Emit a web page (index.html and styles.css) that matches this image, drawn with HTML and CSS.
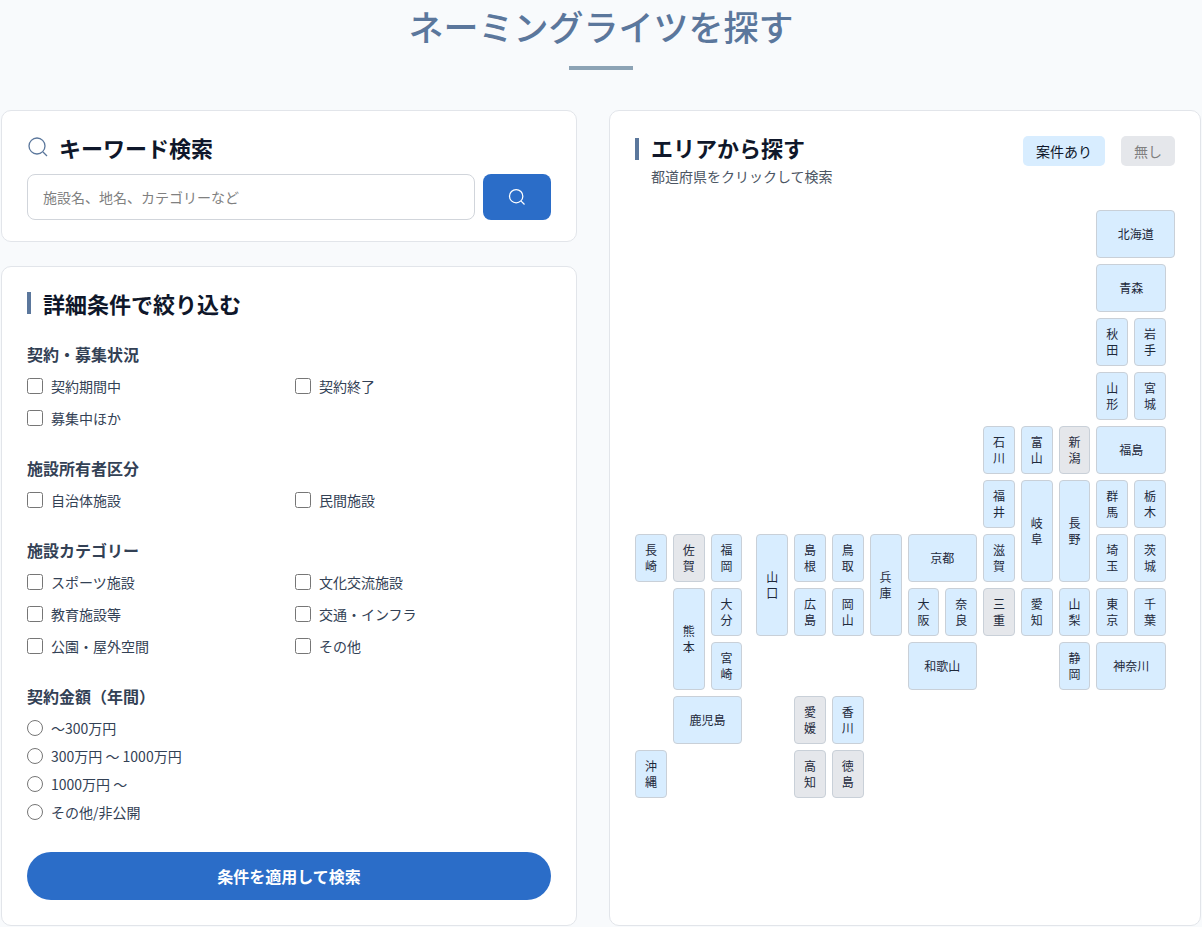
FILE: index.html
```html
<!DOCTYPE html>
<html lang="ja">
<head>
    <meta charset="UTF-8">
    <meta name="viewport" content="width=device-width, initial-scale=1.0">
    <title>ネーミングライツを探す</title>
    <link rel="stylesheet" href="styles.css">
</head>
<body>
    <main class="container">
        <h1 class="page-title">ネーミングライツを探す</h1>

        <div class="search-layout">
            <div class="search-column">
                <form class="card keyword-card">
                    <h2 class="keyword-title">
                        <svg class="keyword-icon" viewBox="0 0 24 24" aria-hidden="true"><circle cx="10" cy="10" r="8"/><path d="M16 16l4 4"/></svg>
                        <label for="keyword">キーワード検索</label>
                    </h2>
                    <div class="keyword-row">
                        <input class="keyword-input" type="text" id="keyword" placeholder="施設名、地名、カテゴリーなど">
                        <button class="keyword-button" type="submit" aria-label="検索">
                            <svg viewBox="0 0 24 24" aria-hidden="true"><circle cx="11" cy="11" r="8"/><path d="M17 17l4 4"/></svg>
                        </button>
                    </div>
                </form>

                <form class="card filter-card">
                    <h2 class="section-title">詳細条件で絞り込む</h2>

                    <fieldset class="filter-group">
                        <legend>契約・募集状況</legend>
                        <div class="check-grid">
                            <label><input type="checkbox" name="status">契約期間中</label>
                            <label><input type="checkbox" name="status">契約終了</label>
                            <label><input type="checkbox" name="status">募集中ほか</label>
                        </div>
                    </fieldset>

                    <fieldset class="filter-group">
                        <legend>施設所有者区分</legend>
                        <div class="check-grid">
                            <label><input type="checkbox" name="owner">自治体施設</label>
                            <label><input type="checkbox" name="owner">民間施設</label>
                        </div>
                    </fieldset>

                    <fieldset class="filter-group">
                        <legend>施設カテゴリー</legend>
                        <div class="check-grid">
                            <label><input type="checkbox" name="category">スポーツ施設</label>
                            <label><input type="checkbox" name="category">文化交流施設</label>
                            <label><input type="checkbox" name="category">教育施設等</label>
                            <label><input type="checkbox" name="category">交通・インフラ</label>
                            <label><input type="checkbox" name="category">公園・屋外空間</label>
                            <label><input type="checkbox" name="category">その他</label>
                        </div>
                    </fieldset>

                    <fieldset class="filter-group">
                        <legend>契約金額（年間）</legend>
                        <div class="radio-list">
                            <label><input type="radio" name="price">～300万円</label>
                            <label><input type="radio" name="price">300万円 ～ 1000万円</label>
                            <label><input type="radio" name="price">1000万円 ～</label>
                            <label><input type="radio" name="price">その他/非公開</label>
                        </div>
                    </fieldset>

                    <button class="apply-button" type="submit">条件を適用して検索</button>
                </form>
            </div>

            <section class="card area-card">
                <div class="area-header">
                    <div class="area-heading">
                        <h2 class="section-title">エリアから探す</h2>
                        <p class="area-note">都道府県をクリックして検索</p>
                    </div>
                    <div class="legend">
                        <span class="legend-item">案件あり</span>
                        <span class="legend-item none">無し</span>
                    </div>
                </div>

                <div class="japan-map">
                    <button class="pref hokkaido">北海道</button>
                    <button class="pref aomori">青森</button>
                    <button class="pref akita">秋田</button>
                    <button class="pref iwate">岩手</button>
                    <button class="pref yamagata">山形</button>
                    <button class="pref miyagi">宮城</button>
                    <button class="pref fukushima">福島</button>
                    <button class="pref ishikawa">石川</button>
                    <button class="pref toyama">富山</button>
                    <button class="pref niigata" disabled>新潟</button>
                    <button class="pref fukui">福井</button>
                    <button class="pref gifu">岐阜</button>
                    <button class="pref nagano">長野</button>
                    <button class="pref gunma">群馬</button>
                    <button class="pref tochigi">栃木</button>
                    <button class="pref saitama">埼玉</button>
                    <button class="pref ibaraki">茨城</button>
                    <button class="pref tokyo">東京</button>
                    <button class="pref chiba">千葉</button>
                    <button class="pref kanagawa">神奈川</button>
                    <button class="pref yamanashi">山梨</button>
                    <button class="pref shizuoka">静岡</button>
                    <button class="pref aichi">愛知</button>
                    <button class="pref shiga">滋賀</button>
                    <button class="pref mie" disabled>三重</button>
                    <button class="pref kyoto">京都</button>
                    <button class="pref osaka">大阪</button>
                    <button class="pref nara">奈良</button>
                    <button class="pref wakayama">和歌山</button>
                    <button class="pref hyogo">兵庫</button>
                    <button class="pref tottori">鳥取</button>
                    <button class="pref okayama">岡山</button>
                    <button class="pref shimane">島根</button>
                    <button class="pref hiroshima">広島</button>
                    <button class="pref yamaguchi">山口</button>
                    <button class="pref ehime" disabled>愛媛</button>
                    <button class="pref kagawa">香川</button>
                    <button class="pref kochi" disabled>高知</button>
                    <button class="pref tokushima" disabled>徳島</button>
                    <button class="pref fukuoka">福岡</button>
                    <button class="pref saga" disabled>佐賀</button>
                    <button class="pref nagasaki">長崎</button>
                    <button class="pref oita">大分</button>
                    <button class="pref kumamoto">熊本</button>
                    <button class="pref miyazaki">宮崎</button>
                    <button class="pref kagoshima">鹿児島</button>
                    <button class="pref okinawa">沖縄</button>
                </div>
            </section>
        </div>
    </main>
</body>
</html>
```

FILE: styles.css
```css
* {
    box-sizing: border-box;
}
body {
    margin: 0;
    background: #f8fafc;
    color: #334155;
    font-family: "Noto Sans CJK JP", sans-serif;
    font-size: 14px;
    line-height: 24px;
}
button,
input {
    font-family: inherit;
}
h1, h2, p {
    margin: 0;
}
.container {
    max-width: 1200px;
    margin: 0 auto;
    padding-bottom: 1px;
}

/* page title */
.page-title {
    color: #5b779c;
    font-size: 35px;
    font-weight: 500;
    line-height: 52px;
    text-align: center;
}
.page-title::after {
    content: "";
    display: block;
    width: 64px;
    height: 4px;
    margin: 14px auto 40px;
    background: #8ca3b5;
}

/* layout */
.search-layout {
    display: grid;
    grid-template-columns: 576fr 592fr;
    gap: 32px;
}
.search-column {
    display: flex;
    flex-direction: column;
    gap: 24px;
}
.card {
    padding: 25px;
    background: #fff;
    border: 1px solid #e2e5ea;
    border-radius: 10px;
}
.section-title {
    padding-left: 12px;
    border-left: 4px solid #5b779c;
    color: #0f172a;
    font-size: 22px;
    font-weight: 700;
    line-height: 22px;
}

/* keyword search */
.keyword-card {
    padding-bottom: 21px;
}
.keyword-title {
    display: flex;
    align-items: flex-start;
    gap: 8px;
    margin-bottom: 14px;
    color: #0f172a;
    font-size: 22px;
    font-weight: 700;
    line-height: 22px;
}
.keyword-icon {
    width: 24px;
    height: 24px;
    fill: none;
    stroke: #5b779c;
    stroke-width: 1.3;
}
.keyword-row {
    display: flex;
    gap: 8px;
}
.keyword-input {
    flex: 1;
    min-width: 0;
    height: 46px;
    padding: 0 15px;
    border: 1px solid #d1d5db;
    border-radius: 8px;
    background: #fff;
    color: #334155;
    font-size: 14px;
}
.keyword-input::placeholder {
    color: #808080;
}
.keyword-button {
    display: flex;
    align-items: center;
    justify-content: center;
    width: 68px;
    height: 46px;
    padding: 0;
    border: 0;
    border-radius: 8px;
    background: #2b6dc8;
    cursor: pointer;
}
.keyword-button svg {
    width: 20px;
    height: 20px;
    fill: none;
    stroke: #fff;
    stroke-width: 1.5;
}

/* filters */
.filter-card .section-title {
    margin-bottom: 28px;
}
.filter-group {
    min-width: 0;
    margin: 0 0 26px;
    padding: 0;
    border: 0;
}
.filter-group:last-of-type {
    margin-bottom: 28px;
}
.filter-group legend {
    margin-bottom: 8px;
    padding: 0;
    font-size: 16px;
    font-weight: 700;
}
.check-grid {
    display: grid;
    grid-template-columns: 1fr 1fr;
    gap: 8px 12px;
}
.radio-list {
    display: flex;
    flex-direction: column;
    align-items: flex-start;
    gap: 4px;
}
.filter-group label {
    display: flex;
    align-items: center;
    gap: 8px;
}
.filter-group input {
    width: 16px;
    height: 16px;
    margin: 0;
}
.apply-button {
    display: block;
    width: 100%;
    height: 48px;
    border: 0;
    border-radius: 24px;
    background: #2b6dc8;
    color: #fff;
    font-size: 16px;
    font-weight: 700;
    cursor: pointer;
}

/* area search */
.area-header {
    display: flex;
    justify-content: space-between;
    align-items: flex-start;
    margin-bottom: 22px;
}
.area-heading {
    padding-top: 2px;
}
.area-heading .section-title {
    padding-bottom: 4px;
    line-height: 18px;
}
.area-note {
    margin-top: 4px;
    padding-left: 16px;
    color: #4b5563;
}
.legend {
    display: flex;
    gap: 16px;
}
.legend-item {
    padding: 3px 13px;
    border-radius: 5px;
    background: #d8edff;
    color: #0f172a;
}
.legend-item.none {
    background: #e5e7eb;
    color: #808080;
}

/* map: narrow columns separate Kyushu and the east edge */
.japan-map {
    display: grid;
    grid-template-columns: repeat(3, 1fr) 2px repeat(11, 1fr) 3px;
    grid-template-rows: repeat(11, 48px);
    gap: 6px;
}
.pref {
    min-width: 0;
    padding: 0 8px;
    border: 1px solid #c9d0d8;
    border-radius: 4px;
    background: #d8edff;
    color: #1e293b;
    font-size: 12px;
    line-height: 16px;
    cursor: pointer;
}
.pref:disabled {
    background: #e5e7eb;
    cursor: default;
}
.hokkaido { grid-area: 1 / 14 / 2 / 17; }
.aomori { grid-area: 2 / 14 / 3 / 16; }
.akita { grid-area: 3 / 14; }
.iwate { grid-area: 3 / 15; }
.yamagata { grid-area: 4 / 14; }
.miyagi { grid-area: 4 / 15; }
.fukushima { grid-area: 5 / 14 / 6 / 16; }
.ishikawa { grid-area: 5 / 11; }
.toyama { grid-area: 5 / 12; }
.niigata { grid-area: 5 / 13; }
.fukui { grid-area: 6 / 11; }
.gifu { grid-area: 6 / 12 / 8 / 13; }
.nagano { grid-area: 6 / 13 / 8 / 14; }
.gunma { grid-area: 6 / 14; }
.tochigi { grid-area: 6 / 15; }
.saitama { grid-area: 7 / 14; }
.ibaraki { grid-area: 7 / 15; }
.tokyo { grid-area: 8 / 14; }
.chiba { grid-area: 8 / 15; }
.kanagawa { grid-area: 9 / 14 / 10 / 16; }
.yamanashi { grid-area: 8 / 13; }
.shizuoka { grid-area: 9 / 13; }
.aichi { grid-area: 8 / 12; }
.shiga { grid-area: 7 / 11; }
.mie { grid-area: 8 / 11; }
.kyoto { grid-area: 7 / 9 / 8 / 11; }
.osaka { grid-area: 8 / 9; }
.nara { grid-area: 8 / 10; }
.wakayama { grid-area: 9 / 9 / 10 / 11; }
.hyogo { grid-area: 7 / 8 / 9 / 9; }
.tottori { grid-area: 7 / 7; }
.okayama { grid-area: 8 / 7; }
.shimane { grid-area: 7 / 6; }
.hiroshima { grid-area: 8 / 6; }
.yamaguchi { grid-area: 7 / 5 / 9 / 6; }
.ehime { grid-area: 10 / 6; }
.kagawa { grid-area: 10 / 7; }
.kochi { grid-area: 11 / 6; }
.tokushima { grid-area: 11 / 7; }
.fukuoka { grid-area: 7 / 3; }
.saga { grid-area: 7 / 2; }
.nagasaki { grid-area: 7 / 1; }
.oita { grid-area: 8 / 3; }
.kumamoto { grid-area: 8 / 2 / 10 / 3; }
.miyazaki { grid-area: 9 / 3; }
.kagoshima { grid-area: 10 / 2 / 11 / 4; }
.okinawa { grid-area: 11 / 1; }
```
